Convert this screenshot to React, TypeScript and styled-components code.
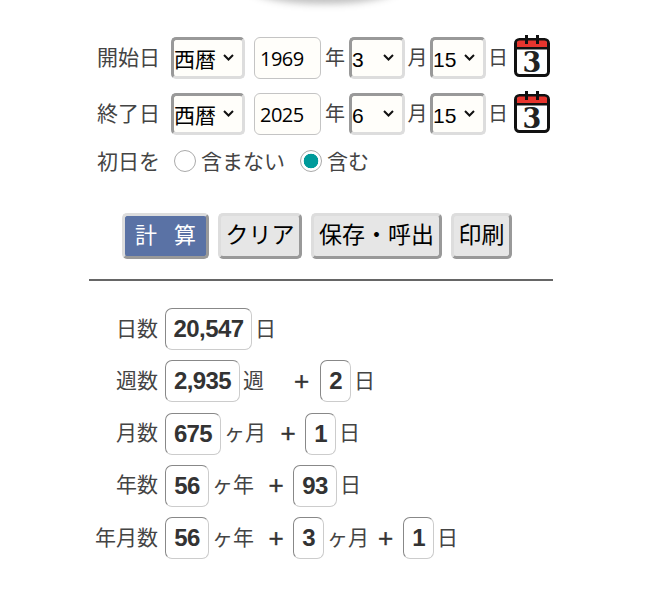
import styled, { createGlobalStyle } from 'styled-components';

const GlobalStyle = createGlobalStyle`
  html, body {
    margin: 0;
    padding: 0;
    background: #fff;
  }
  body {
    font-family: "Liberation Sans", "Noto Sans CJK JP", sans-serif;
    color: #333;
  }
`;

const chevron =
  "data:image/svg+xml,%3Csvg xmlns='http://www.w3.org/2000/svg' width='11' height='7' viewBox='0 0 11 7'%3E%3Cpath d='M1 1l4.5 4.5L10 1' fill='none' stroke='%23111' stroke-width='2'/%3E%3C/svg%3E";

const Page = styled.div`
  position: relative;
  width: 657px;
  height: 590px;
  overflow: hidden;
`;

const TopShadow = styled.div`
  position: absolute;
  left: 250px;
  top: -30px;
  width: 148px;
  height: 30px;
  border-radius: 50%;
  box-shadow: 0 1px 7px 3px rgba(90, 90, 90, 0.38);
`;

const Form = styled.form`
  display: flex;
  flex-direction: column;
  padding: 35px 0 0 97px;
`;

const DateRow = styled.div`
  display: flex;
  align-items: center;
  height: 44px;
  margin-bottom: 12px;
`;

const FieldLabel = styled.span`
  width: 62px;
  margin: 0 12px 2px 0;
  font-size: 21px;
  font-family: "Noto Sans CJK JP", sans-serif;
  color: #444;
  white-space: nowrap;
`;

const Unit = styled.span<{ $w: number }>`
  width: ${(p) => p.$w}px;
  margin-bottom: 2px;
  font-size: 20px;
  text-align: center;
  font-family: "Noto Sans CJK JP", sans-serif;
  color: #444;
`;

const Select = styled.select<{ $w: number }>`
  appearance: none;
  box-sizing: border-box;
  width: ${(p) => p.$w}px;
  height: 42px;
  margin: 2px 0 0;
  padding: 3px 0 0 0;
  border-width: 3px;
  border-style: solid;
  border-color: #999 #ddd #ddd #999;
  border-radius: 5px;
  background: #fffefa url("${chevron}") no-repeat right 8px top 14px;
  color: #000;
  font-size: 21px;
  font-family: "Liberation Sans", "Noto Sans CJK JP", sans-serif;
`;

const YearInput = styled.input`
  box-sizing: border-box;
  width: 67px;
  height: 42px;
  margin: 2px 0 0 9px;
  padding: 0 0 0 5px;
  border: 1px solid #c4c4c4;
  border-radius: 6px;
  background: #fffefa;
  color: #000;
  font-size: 20px;
  letter-spacing: -0.5px;
  font-family: "Open Sans", sans-serif;
`;

const CalendarSvg = styled.svg`
  width: 36px;
  height: 42px;
  margin: 0 0 2px 4px;
  flex: none;
`;

const RadioRow = styled.div`
  display: flex;
  align-items: center;
  height: 26px;
  margin-top: 1px;
`;

const RadioLabel = styled.label`
  display: flex;
  align-items: center;
  margin-right: 12px;
  font-size: 21px;
  font-family: "Noto Sans CJK JP", sans-serif;
  color: #444;
`;

const RadioText = styled.span`
  margin-bottom: 2px;
`;

const Radio = styled.input`
  appearance: none;
  box-sizing: border-box;
  width: 22px;
  height: 22px;
  margin: 0 5px 0 3px;
  border: 1px solid #aaa;
  border-radius: 50%;
  background: #fff;

  &:checked {
    background: radial-gradient(circle, #009a9a 0 7px, #fff 7.6px);
  }
`;

const Buttons = styled.div`
  display: flex;
  gap: 9px;
  margin: 39px 0 0 25px;
`;

const Button = styled.button<{ $primary?: boolean; $w: number }>`
  box-sizing: border-box;
  width: ${(p) => p.$w}px;
  height: 46px;
  padding: 0 0 7px;
  border-width: 3px;
  border-style: solid;
  border-color: #ddd #999 #999 #ddd;
  border-radius: 5px;
  background: ${(p) => (p.$primary ? '#5a72a5' : '#e6e6e6')};
  color: ${(p) => (p.$primary ? '#fff' : '#000')};
  font-size: ${(p) => (p.$primary ? 22 : 23)}px;
  word-spacing: ${(p) => (p.$primary ? 12 : 0)}px;
  font-family: "Noto Sans CJK JP", sans-serif;
  white-space: pre;
`;

const Rule = styled.hr`
  width: 464px;
  height: 2px;
  margin: 20px 0 0 89px;
  border: 0;
  background: #666;
`;

const Results = styled.div`
  display: flex;
  flex-direction: column;
  gap: 10px;
  margin-top: 27px;
`;

const ResultRow = styled.div`
  display: flex;
  align-items: center;
  height: 42.25px;
`;

const ResultLabel = styled.span`
  width: 158px;
  margin: 0 7px 5px 0;
  text-align: right;
  font-size: 21px;
  font-family: "Noto Sans CJK JP", sans-serif;
  color: #444;
`;

const ValueBox = styled.output<{ $w: number }>`
  box-sizing: border-box;
  display: flex;
  align-items: center;
  justify-content: center;
  height: 42px;
  width: ${(p) => p.$w}px;
  border: 1px solid;
  border-color: #888 #ccc #ccc #888;
  border-radius: 7px;
  color: #333;
  font-size: 24px;
  letter-spacing: -0.6px;
  font-weight: 700;
`;

const ResultUnit = styled.span<{ $w: number }>`
  width: ${(p) => p.$w}px;
  margin-bottom: 5px;
  font-size: 21px;
  padding-left: 3px;
  box-sizing: border-box;
  font-family: "Noto Sans CJK JP", sans-serif;
  color: #444;
  white-space: nowrap;
`;

const Plus = styled.span<{ $w: number }>`
  width: ${(p) => p.$w}px;
  text-align: center;
  font-size: 26px;
  -webkit-text-stroke: 0.4px #333;
  color: #333;
`;

const Calendar = () => (
  <CalendarSvg viewBox="0 0 36 42">
    <rect x="1.5" y="4.5" width="33" height="36" rx="4" fill="#fff" stroke="#111" strokeWidth="3" />
    <path d="M3 8a2.5 2.5 0 0 1 2.5-2.5h25a2.5 2.5 0 0 1 2.5 2.5v4.5h-30z" fill="#e8352e" />
    <rect x="1" y="12" width="34" height="2.5" fill="#111" />
    <rect x="11" y="0" width="3" height="9" fill="#111" />
    <rect x="22" y="0" width="3" height="9" fill="#111" />
    <text x="18" y="36.5" textAnchor="middle" fontSize="27" fontWeight="700" fontFamily="DejaVu Serif, serif" fill="#222">
      3
    </text>
  </CalendarSvg>
);

const DateFields = ({ label, year, month, day }: { label: string; year: string; month: string; day: string }) => {
  const months = Array.from({ length: 12 }, (_, i) => String(i + 1));
  const days = Array.from({ length: 31 }, (_, i) => String(i + 1));
  return (
    <DateRow>
      <FieldLabel>{label}</FieldLabel>
      <Select $w={74} defaultValue="西暦">
        <option>西暦</option>
        <option>和暦</option>
      </Select>
      <YearInput defaultValue={year} />
      <Unit $w={28}>年</Unit>
      <Select $w={56} defaultValue={month}>
        {months.map((m) => (
          <option key={m}>{m}</option>
        ))}
      </Select>
      <Unit $w={25}>月</Unit>
      <Select $w={56} defaultValue={day}>
        {days.map((d) => (
          <option key={d}>{d}</option>
        ))}
      </Select>
      <Unit $w={24}>日</Unit>
      <Calendar />
    </DateRow>
  );
};

export default function App() {
  return (
    <Page>
      <GlobalStyle />
      <TopShadow />
      <Form>
        <DateFields label="開始日" year="1969" month="3" day="15" />
        <DateFields label="終了日" year="2025" month="6" day="15" />
        <RadioRow>
          <FieldLabel>初日を</FieldLabel>
          <RadioLabel>
            <Radio type="radio" name="first" />
            <RadioText>含まない</RadioText>
          </RadioLabel>
          <RadioLabel>
            <Radio type="radio" name="first" defaultChecked />
            <RadioText>含む</RadioText>
          </RadioLabel>
        </RadioRow>
        <Buttons>
          <Button type="button" $primary $w={87}>
            計 算
          </Button>
          <Button type="button" $w={84}>
            クリア
          </Button>
          <Button type="button" $w={131}>
            保存・呼出
          </Button>
          <Button type="button" $w={61}>
            印刷
          </Button>
        </Buttons>
      </Form>
      <Rule />
      <Results>
        <ResultRow>
          <ResultLabel>日数</ResultLabel>
          <ValueBox $w={87}>20,547</ValueBox>
          <ResultUnit $w={30}>日</ResultUnit>
        </ResultRow>
        <ResultRow>
          <ResultLabel>週数</ResultLabel>
          <ValueBox $w={75}>2,935</ValueBox>
          <ResultUnit $w={43}>週</ResultUnit>
          <Plus $w={37}>+</Plus>
          <ValueBox $w={31}>2</ValueBox>
          <ResultUnit $w={30}>日</ResultUnit>
        </ResultRow>
        <ResultRow>
          <ResultLabel>月数</ResultLabel>
          <ValueBox $w={56}>675</ValueBox>
          <ResultUnit $w={50}>ヶ月</ResultUnit>
          <Plus $w={34}>+</Plus>
          <ValueBox $w={31}>1</ValueBox>
          <ResultUnit $w={30}>日</ResultUnit>
        </ResultRow>
        <ResultRow>
          <ResultLabel>年数</ResultLabel>
          <ValueBox $w={44}>56</ValueBox>
          <ResultUnit $w={50}>ヶ年</ResultUnit>
          <Plus $w={34}>+</Plus>
          <ValueBox $w={44}>93</ValueBox>
          <ResultUnit $w={30}>日</ResultUnit>
        </ResultRow>
        <ResultRow>
          <ResultLabel>年月数</ResultLabel>
          <ValueBox $w={44}>56</ValueBox>
          <ResultUnit $w={50}>ヶ年</ResultUnit>
          <Plus $w={34}>+</Plus>
          <ValueBox $w={31}>3</ValueBox>
          <ResultUnit $w={44}>ヶ月</ResultUnit>
          <Plus $w={35}>+</Plus>
          <ValueBox $w={31}>1</ValueBox>
          <ResultUnit $w={30}>日</ResultUnit>
        </ResultRow>
      </Results>
    </Page>
  );
}
